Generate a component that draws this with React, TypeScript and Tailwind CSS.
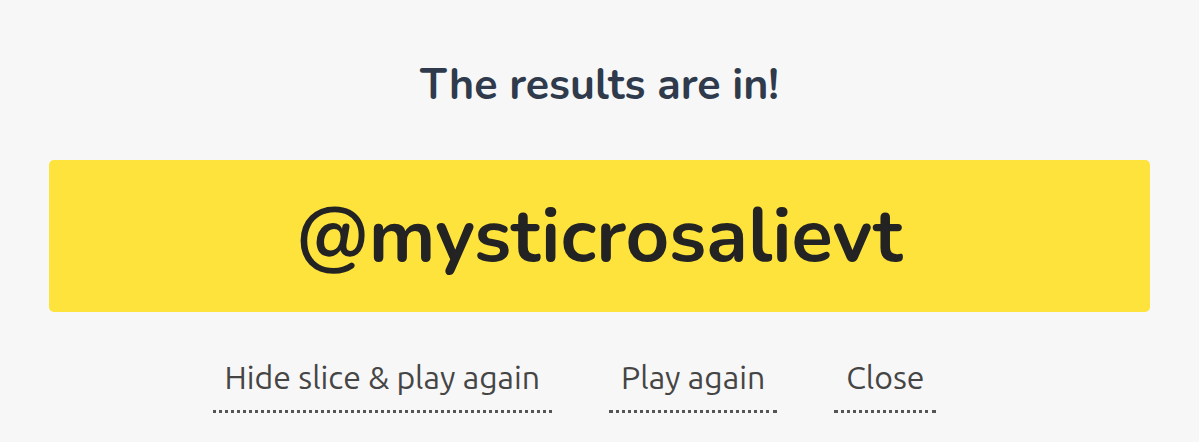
import React from "react";

export default function App() {
  const links = ["Hide slice & play again", "Play again", "Close"];
  return (
    <div className="w-[1199px] h-[442px] bg-[#f7f7f7] flex flex-col items-center overflow-hidden" style={{ fontFamily: "Nunito, 'Noto Sans', Lato, sans-serif" }}>
      <h1 className="mt-[64px] h-[42px] flex items-center text-[43px] font-bold text-[#2f3b4c] leading-none">
        The results are in!
      </h1>
      <div className="mt-[54px] w-[1101px] h-[152px] bg-[#fee33c] rounded-[5px] flex items-center justify-center">
        <span className="text-[76px] font-bold text-[#232323] leading-none">@mysticrosalievt</span>
      </div>
      <div className="mt-[49px] mr-[50px] flex gap-[57px]" style={{ fontFamily: "Ubuntu, 'Noto Sans', sans-serif" }}>
        {links.map((l) => (
          <button key={l} className="px-[12px] pb-[17px] border-b-[3px] border-dotted border-[#555] text-[32px] text-[#454545] leading-none">
            {l}
          </button>
        ))}
      </div>
    </div>
  );
}
